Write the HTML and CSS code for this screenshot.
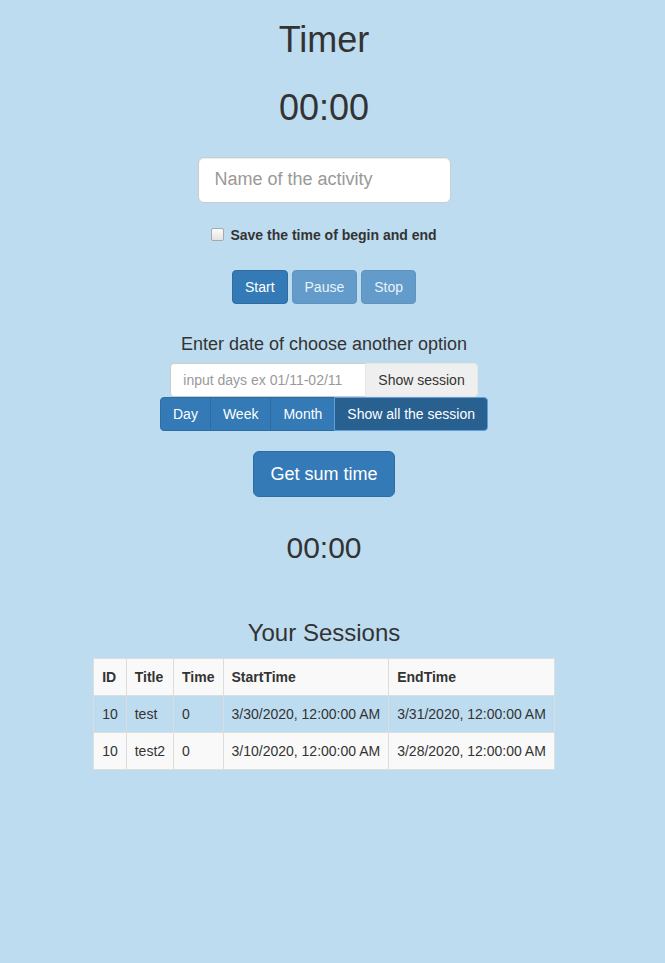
FILE: index.html
```html
<!DOCTYPE html>
<html>
<head>
<meta charset="utf-8">
<title>Timer</title>
<link rel="stylesheet" href="styles.css">
</head>
<body>
<div class="page">
  <h1 class="title">Timer</h1>
  <h1 class="clock">00:00</h1>
  <input class="activity" type="text" placeholder="Name of the activity">
  <label class="check"><input type="checkbox"><span>Save the time of begin and end</span></label>
  <div class="controls">
    <button class="btn btn-primary">Start</button>
    <button class="btn btn-primary disabled">Pause</button>
    <button class="btn btn-primary disabled">Stop</button>
  </div>
  <p class="prompt">Enter date of choose another option</p>
  <div class="input-group">
    <input class="days" type="text" placeholder="input days ex 01/11-02/11">
    <button class="addon">Show session</button>
  </div>
  <div class="btn-group">
    <button class="gbtn first">Day</button>
    <button class="gbtn">Week</button>
    <button class="gbtn">Month</button>
    <button class="gbtn last active">Show all the session</button>
  </div>
  <button class="btn btn-primary btn-lg sum">Get sum time</button>
  <h2 class="sumtime">00:00</h2>
  <h3 class="sessions">Your Sessions</h3>
  <table class="table">
    <tbody>
      <tr class="striped"><th>ID</th><th>Title</th><th>Time</th><th>StartTime</th><th>EndTime</th></tr>
      <tr><td>10</td><td>test</td><td>0</td><td>3/30/2020, 12:00:00 AM</td><td>3/31/2020, 12:00:00 AM</td></tr>
      <tr class="striped"><td>10</td><td>test2</td><td>0</td><td>3/10/2020, 12:00:00 AM</td><td>3/28/2020, 12:00:00 AM</td></tr>
    </tbody>
  </table>
</div>
</body>
</html>
```
FILE: styles.css
```css
html, body {
  margin: 0;
  padding: 0;
}
body {
  background: #bedcf0;
  font-family: "Liberation Sans", Arial, sans-serif;
  font-size: 14px;
  line-height: 20px;
  color: #333;
  min-height: 963px;
}
.page {
  width: 648px;
  display: flex;
  flex-direction: column;
  align-items: center;
}
.title, .clock {
  font-size: 36px;
  font-weight: 500;
  line-height: 39.6px;
  margin: 0;
}
.title { margin-top: 20px; }
.clock { margin-top: 28.7px; }
.activity {
  box-sizing: border-box;
  margin-top: 29px;
  width: 253px;
  height: 46px;
  padding: 10px 16px;
  font: 18px "Liberation Sans", Arial, sans-serif;
  color: #555;
  background: #fff;
  border: 1px solid #ccc;
  border-radius: 6px;
  box-shadow: inset 0 1px 1px rgba(0,0,0,.075);
  outline: none;
}
.activity::placeholder, .days::placeholder { color: #999; }
.check {
  margin-top: 22px;
  display: flex;
  align-items: center;
  font-weight: bold;
  height: 20px;
}
.check input {
  -webkit-appearance: none;
  appearance: none;
  box-sizing: border-box;
  margin: 0 6px 0 0;
  width: 13px;
  height: 13px;
  border: 1px solid #a9a9a9;
  border-radius: 2px;
  background: linear-gradient(#fcfcfc, #e4e4e4);
}
.controls {
  margin-top: 25px;
  display: flex;
  gap: 4px;
}
.btn {
  box-sizing: border-box;
  height: 34px;
  padding: 6px 12px;
  font: 14px/20px "Liberation Sans", Arial, sans-serif;
  border: 1px solid transparent;
  border-radius: 4px;
  cursor: pointer;
}
.btn-primary {
  color: #fff;
  background: #337ab7;
  border-color: #2e6da4;
}
.btn-primary.disabled { opacity: .65; }
.prompt {
  margin: 30px 0 0;
  font-size: 18px;
  line-height: 20px;
}
.input-group {
  margin-top: 9px;
  display: flex;
}
.days {
  box-sizing: border-box;
  width: 195px;
  height: 34px;
  padding: 6px 12px;
  font: 14px "Liberation Sans", Arial, sans-serif;
  color: #555;
  background: #fff;
  border: 1px solid #ccc;
  border-right: 0;
  border-radius: 4px 0 0 4px;
  outline: none;
}
.addon {
  box-sizing: border-box;
  white-space: nowrap;
  height: 34px;
  padding: 6px 12px;
  font: 14px/20px "Liberation Sans", Arial, sans-serif;
  color: #333;
  background: #efefef;
  border: 1px solid #e6e6e6;
  border-radius: 0 4px 4px 0;
}
.btn-group {
  display: flex;
}
.gbtn {
  box-sizing: border-box;
  white-space: nowrap;
  height: 34px;
  padding: 6px 12px;
  font: 14px/20px "Liberation Sans", Arial, sans-serif;
  color: #fff;
  background: #337ab7;
  border: 1px solid #2e6da4;
  margin-left: -1px;
}
.gbtn.first { margin-left: 0; border-radius: 4px 0 0 4px; }
.gbtn.last { border-radius: 0 4px 4px 0; }
.gbtn.active {
  background: #286090;
  border-color: #5f9fdc;
  position: relative;
}
.btn-lg {
  height: 46px;
  padding: 10px 16px;
  font-size: 18px;
  line-height: 24px;
  border-radius: 6px;
}
.sum { margin-top: 20px; }
.sumtime {
  margin: 34.6px 0 0;
  font-size: 30px;
  font-weight: 500;
  line-height: 33px;
}
.sessions {
  margin: 55.3px 0 0;
  font-size: 24px;
  font-weight: 500;
  line-height: 26.4px;
}
.table {
  margin-top: 11.7px;
  border-collapse: collapse;
  font-size: 14px;
  line-height: 20px;
}
.table th, .table td {
  border: 1px solid #ddd;
  padding: 8px;
  text-align: left;
  vertical-align: top;
}
.table th { font-weight: bold; }
.table tr.striped { background: #f9f9f9; }
```
